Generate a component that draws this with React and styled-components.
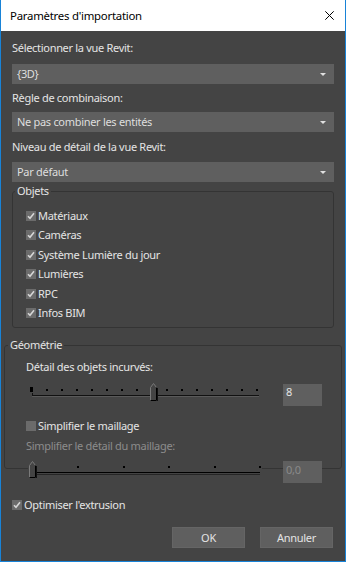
import React from "react";
import styled, { createGlobalStyle } from "styled-components";

const GlobalStyle = createGlobalStyle`
  html, body { margin: 0; padding: 0; background: #444444; }
  body { font-family: "Noto Sans", "Open Sans", sans-serif; }
  *, *::before, *::after { box-sizing: border-box; }
`;

const Window = styled.div`
  width: 346px;
  height: 562px;
  display: flex;
  flex-direction: column;
  border: 1px solid #1883d7;
  border-top: none;
  background: #444444;
  overflow: hidden;
`;

const TitleBar = styled.div`
  flex: none;
  height: 31px;
  background: #ffffff;
  display: flex;
  align-items: center;
  justify-content: space-between;
  padding: 0 11px 0 9px;
  font-size: 11.4px;
  letter-spacing: -0.25px;
  color: #000;
`;

const CloseIcon = styled.svg`
  width: 9px;
  height: 9px;
  display: block;
`;

const Body = styled.div`
  flex: 1;
  display: flex;
  flex-direction: column;
  padding: 9px 11px 0;
  color: #e4e4e4;
  font-size: 11px;
  letter-spacing: -0.3px;
`;

const Label = styled.div`
  line-height: 16px;
  height: 16px;
  margin-top: ${(p) => p.$mt || 0}px;
  color: ${(p) => (p.$disabled ? "#8c8c8c" : "#e4e4e4")};
  white-space: nowrap;
`;

const Select = styled.div`
  height: 20px;
  margin-top: ${(p) => p.$mt || 0}px;
  background: #5f5f5f;
  display: flex;
  align-items: center;
  justify-content: space-between;
  padding: 0 8px 0 5px;
  color: #dedede;
  line-height: 20px;
`;

const Arrow = styled.span`
  width: 0;
  height: 0;
  border-left: 3px solid transparent;
  border-right: 3px solid transparent;
  border-top: 3px solid #e0e0e0;
`;

const Group = styled.fieldset`
  margin: ${(p) => p.$mt}px ${(p) => -p.$out}px 0;
  padding: ${(p) => p.$pt}px 0 ${(p) => p.$pb}px ${(p) => p.$pl}px;
  border: 1px solid #343434;
  border-radius: 3px;
  min-width: 0;
`;

const Legend = styled.legend`
  padding: 0 2px;
  margin-left: ${(p) => p.$ml}px;
  line-height: 14px;
  font-size: 11px;
  color: #e4e4e4;
`;

const CheckRow = styled.div`
  display: flex;
  align-items: center;
  gap: 2px;
  height: ${(p) => p.$h || 19}px;
  margin-top: ${(p) => p.$mt || 0}px;
  line-height: 16px;
  white-space: nowrap;
`;

const Box = styled.span`
  flex: none;
  width: 10px;
  height: 10px;
  background: #6b6b6b;
  display: flex;
  align-items: center;
  justify-content: center;
`;

const SliderRow = styled.div`
  display: flex;
  align-items: flex-start;
  gap: 21px;
  margin: ${(p) => p.$mt}px 0 ${(p) => p.$mb || 0}px 2px;
  height: 22px;
`;

const SliderSvg = styled.svg`
  display: block;
  flex: none;
  background: #444444;
`;

const NumberBox = styled.div`
  flex: none;
  width: 39px;
  height: 22px;
  margin-top: ${(p) => p.$mt || 0}px;
  background: #5f5f5f;
  padding-left: 3px;
  line-height: ${(p) => p.$lh}px;
  color: ${(p) => (p.$disabled ? "#8a8a8a" : "#e4e4e4")};
`;

const ButtonRow = styled.div`
  display: flex;
  justify-content: flex-end;
  gap: 15px;
  margin-top: 13px;
  padding-right: 1px;
`;

const Button = styled.div`
  width: 73px;
  height: 21px;
  background: #5f5f5f;
  border: 1px solid #656565;
  color: #e4e4e4;
  display: flex;
  align-items: center;
  justify-content: center;
`;

const Check = ({ checked }) => (
  <Box>
    {checked && (
      <svg width="8" height="8" viewBox="0 0 8 8">
        <path d="M1 4.2 L3 6.3 L7 1.3" fill="none" stroke="#d6d6d6" strokeWidth="1.6" />
      </svg>
    )}
  </Box>
);

const Thumb = ({ x, h }) => (
  <g transform={`translate(${x} 0)`}>
    <polygon
      points={`0.5,4.5 3.5,0.5 6.5,4.5 6.5,${h - 0.5} 0.5,${h - 0.5}`}
      fill="#444444"
      stroke="#7a7a7a"
    />
    <polyline points={`6.5,4.5 6.5,${h - 0.5} 0.5,${h - 0.5}`} fill="none" stroke="#000" />
    <line x1="7.5" y1="5" x2="7.5" y2={h} stroke="#111" />
  </g>
);

const DetailSlider = () => {
  const ticks = Array.from({ length: 15 }, (_, i) => 4 + 15 * (i + 1));
  return (
    <SliderSvg width="234" height="19" viewBox="0 0 234 19">
      <rect x="2" y="4" width="3" height="5" fill="#000" />
      {ticks.map((t) => (
        <rect key={t} x={t - 1} y="6" width="2" height="2" fill="#000" />
      ))}
      <rect x="4" y="10" width="1" height="3" fill="#111" />
      <rect x="4" y="12" width="227" height="1" fill="#111" />
      <rect x="4" y="13" width="227" height="1" fill="#5a5a5a" />
      <Thumb x={122} h={18} />
    </SliderSvg>
  );
};

const MeshSlider = () => {
  const ticks = [50, 96, 141, 187, 232];
  return (
    <SliderSvg width="234" height="18" viewBox="0 0 234 18">
      {ticks.map((t) => (
        <rect key={t} x={t - 1} y="5" width="2" height="2" fill="#000" />
      ))}
      <rect x="8" y="11" width="224" height="1" fill="#000" />
      <rect x="8" y="13" width="224" height="1" fill="#262626" />
      <Thumb x={1} h={17} />
    </SliderSvg>
  );
};

const objets = ["Matériaux", "Caméras", "Système Lumière du jour", "Lumières", "RPC", "Infos BIM"];

export default function App() {
  return (
    <>
      <GlobalStyle />
      <Window>
        <TitleBar>
          <span>Paramètres d'importation</span>
          <CloseIcon viewBox="0 0 9 9">
            <path d="M0.3 0.3 L8.7 8.7 M8.7 0.3 L0.3 8.7" stroke="#000" strokeWidth="1" />
          </CloseIcon>
        </TitleBar>
        <Body>
          <Label>Sélectionner la vue Revit:</Label>
          <Select $mt={8}>
            <span>{"{3D}"}</span>
            <Arrow />
          </Select>
          <Label $mt={6}>Règle de combinaison:</Label>
          <Select $mt={6}>
            <span>Ne pas combiner les entités</span>
            <Arrow />
          </Select>
          <Label $mt={7}>Niveau de détail de la vue Revit:</Label>
          <Select $mt={7}>
            <span>Par défaut</span>
            <Arrow />
          </Select>

          <Group $mt={2} $out={0} $pt={8} $pb={4} $pl={13}>
            <Legend $ml={-11}>Objets</Legend>
            {objets.map((o) => (
              <CheckRow key={o} $h={19.5}>
                <Check checked />
                <span>{o}</span>
              </CheckRow>
            ))}
          </Group>

          <Group $mt={10} $out={8} $pt={7} $pb={0} $pl={21}>
            <Legend $ml={-18}>Géométrie</Legend>
            <Label>Détail des objets incurvés:</Label>
            <SliderRow $mt={8}>
              <DetailSlider />
              <NumberBox $mt={1} $lh={16}>8</NumberBox>
            </SliderRow>
            <CheckRow $mt={11}>
              <Check />
              <span>Simplifier le maillage</span>
            </CheckRow>
            <Label $mt={3} $disabled>Simplifier le détail du maillage:</Label>
            <SliderRow $mt={7} $mb={-15}>
              <MeshSlider />
              <NumberBox $lh={18} $disabled>0,0</NumberBox>
            </SliderRow>
          </Group>

          <CheckRow $mt={26}>
            <Check checked />
            <span>Optimiser l'extrusion</span>
          </CheckRow>

          <ButtonRow>
            <Button>OK</Button>
            <Button>Annuler</Button>
          </ButtonRow>
        </Body>
      </Window>
    </>
  );
}
